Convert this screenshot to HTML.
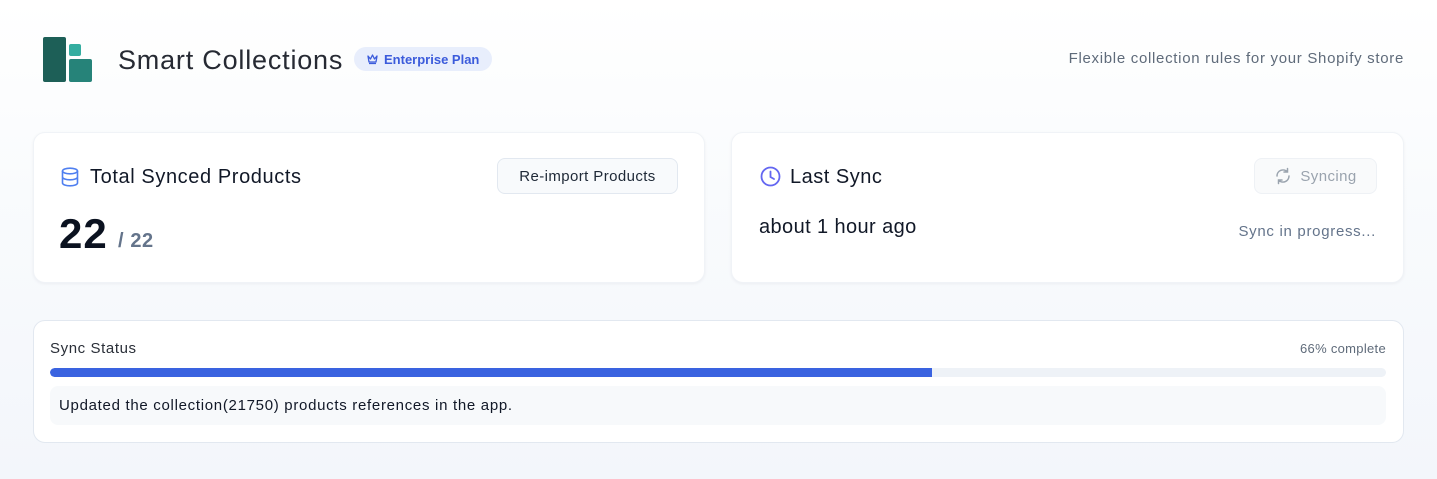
<!DOCTYPE html>
<html><head><style>
*{margin:0;padding:0;box-sizing:border-box}
body{width:1437px;height:479px;overflow:hidden;font-family:"Liberation Sans",sans-serif;background:linear-gradient(180deg,#ffffff 0%,#f9fbfd 40%,#f3f6fb 100%);position:relative;color:#111827}
.abs{position:absolute;white-space:nowrap}
.card{position:absolute;background:#fff;border-radius:12px;box-shadow:0 1px 3px rgba(15,23,42,0.05);border:1px solid #f0f3f7}
.btn{position:absolute;border:1px solid #e2e8f0;border-radius:8px;background:#f8fafc;font-size:15px;display:flex;align-items:center;justify-content:center;letter-spacing:0.4px}
</style></head><body>
<div class="abs" style="left:43px;top:37px;width:23px;height:45px;background:#1d5f57;border-radius:2px"></div>
<div class="abs" style="left:69px;top:44px;width:12px;height:12px;background:#34ada0;border-radius:2px"></div>
<div class="abs" style="left:69px;top:59px;width:23px;height:23px;background:#268379;border-radius:2px"></div>
<div class="abs" style="left:118px;top:45px;font-size:27px;color:#262a33;letter-spacing:0.8px">Smart Collections</div>
<div class="abs" style="left:354px;top:47px;width:138px;height:24px;border-radius:12px;background:#e8eefc;color:#3b5bdb;font-size:13px;font-weight:bold;display:flex;align-items:center;padding-left:12px">
<svg width="13" height="12" viewBox="0 0 13 12" style="margin-right:5px"><path d="M2 3l2.5 3L6.5 2l2 4L11 3l-1 6H3z M3 10.5h7" fill="none" stroke="#3b5bdb" stroke-width="1.3" stroke-linejoin="round"/></svg>Enterprise Plan</div>
<div class="abs" style="right:33px;top:50px;font-size:15px;color:#5f6b7a;letter-spacing:0.7px">Flexible collection rules for your Shopify store</div>

<div class="card" style="left:33px;top:132px;width:672px;height:151px">
<svg class="abs" style="left:27px;top:34px" width="18" height="20" viewBox="0 0 18 20"><ellipse cx="9" cy="4" rx="7.5" ry="2.8" fill="none" stroke="#4f7ff0" stroke-width="1.6"/><path d="M1.5 4v12c0 1.6 3.4 2.8 7.5 2.8s7.5-1.2 7.5-2.8V4M1.5 10c0 1.6 3.4 2.8 7.5 2.8s7.5-1.2 7.5-2.8" fill="none" stroke="#4f7ff0" stroke-width="1.6"/></svg>
<div class="abs" style="left:56px;top:33px;font-size:20px;color:#111827;letter-spacing:0.6px">Total Synced Products</div>
<div class="btn" style="left:463px;top:25px;width:181px;height:36px;color:#1f2937">Re-import Products</div>
<div class="abs" style="left:25px;top:77px;font-size:42px;font-weight:bold;color:#0b1220;letter-spacing:1px">22</div>
<div class="abs" style="left:84px;top:97px;font-size:20px;font-weight:bold;color:#64748b;letter-spacing:0.6px">/ 22</div>
</div>

<div class="card" style="left:731px;top:132px;width:673px;height:151px">
<svg class="abs" style="left:28px;top:33px" width="21" height="21" viewBox="0 0 21 21"><circle cx="10.5" cy="10.5" r="9" fill="none" stroke="#6366f1" stroke-width="1.8"/><path d="M10.5 5.5v5.5l3.5 2" fill="none" stroke="#6366f1" stroke-width="1.8" stroke-linecap="round"/></svg>
<div class="abs" style="left:58px;top:33px;font-size:20px;color:#111827;letter-spacing:0.5px">Last Sync</div>
<div class="btn" style="left:522px;top:25px;width:123px;height:36px;color:#9aa3ae;background:#f9fafb;border-color:#eef1f5">
<svg width="18" height="18" viewBox="0 0 18 18" style="margin-right:8px"><path d="M3 9a6 6 0 0 1 10.5-4M15 9a6 6 0 0 1-10.5 4M13.5 1.5v3.5H10M4.5 16.5V13H8" fill="none" stroke="#9aa3ae" stroke-width="1.5" stroke-linecap="round"/></svg>Syncing</div>
<div class="abs" style="left:27px;top:83px;font-size:20px;color:#111827;letter-spacing:0.4px">about 1 hour ago</div>
<div class="abs" style="right:27px;top:90px;font-size:15px;color:#64748b;letter-spacing:0.7px">Sync in progress...</div>
</div>

<div class="card" style="left:33px;top:320px;width:1371px;height:123px;border-color:#e2e8f0;box-shadow:none">
<div class="abs" style="left:16px;top:19px;font-size:15px;color:#2a2f38;letter-spacing:0.6px">Sync Status</div>
<div class="abs" style="right:17px;top:20px;font-size:13px;color:#5f6b7a;letter-spacing:0.3px">66% complete</div>
<div class="abs" style="left:16px;top:47px;width:1336px;height:9px;border-radius:5px;background:#eef2f7;overflow:hidden"><div style="width:882px;height:9px;background:#3a63e0;border-radius:5px 0 0 5px"></div></div>
<div class="abs" style="left:16px;top:65px;width:1336px;height:39px;border-radius:8px;background:#f7f9fb;font-size:15px;color:#111827;padding:11px 0 0 9px;letter-spacing:0.7px">Updated the collection(21750) products references in the app.</div>
</div>
</body></html>
